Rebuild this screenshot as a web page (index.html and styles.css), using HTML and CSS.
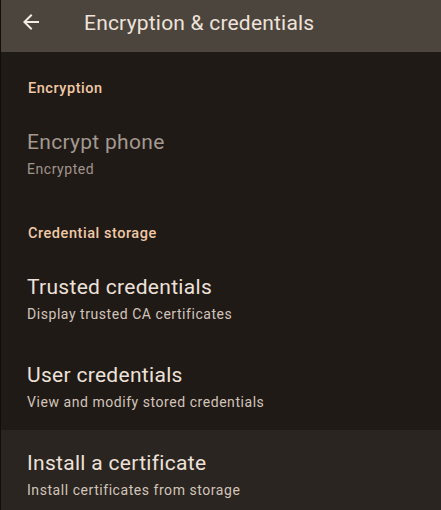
FILE: index.html
```html
<!DOCTYPE html>
<html lang="en">
<head>
<meta charset="utf-8">
<title>Encryption &amp; credentials</title>
<link rel="stylesheet" href="styles.css">
</head>
<body>
<div class="screen">
  <header class="appbar">
    <button class="back" aria-label="Back">
      <svg width="24" height="24" viewBox="0 0 24 24"><path d="M20 11H7.83l5.59-5.59L12 4l-8 8 8 8 1.41-1.41L7.83 13H20v-2z" fill="currentColor"/></svg>
    </button>
    <h1 class="title">Encryption &amp; credentials</h1>
  </header>
  <main class="list">
    <div class="category">Encryption</div>
    <div class="pref disabled">
      <div class="pref-title">Encrypt phone</div>
      <div class="pref-summary">Encrypted</div>
    </div>
    <div class="category">Credential storage</div>
    <div class="pref">
      <div class="pref-title">Trusted credentials</div>
      <div class="pref-summary">Display trusted CA certificates</div>
    </div>
    <div class="pref">
      <div class="pref-title">User credentials</div>
      <div class="pref-summary">View and modify stored credentials</div>
    </div>
    <div class="pref focused">
      <div class="pref-title">Install a certificate</div>
      <div class="pref-summary">Install certificates from storage</div>
    </div>
  </main>
</div>
</body>
</html>
```
FILE: styles.css
```css
html, body {
  margin: 0;
  padding: 0;
  background: #201a17;
}
body {
  font-family: Roboto, "Noto Sans", "Liberation Sans", sans-serif;
  overflow: hidden;
}
.screen {
  width: 441px;
  height: 510px;
  box-sizing: border-box;
  border-left: 1px solid #100d0c;
  background: #201a17;
  overflow: hidden;
}
.appbar {
  height: 52px;
  box-sizing: border-box;
  padding-top: 9px;
  background: #4b453e;
  display: flex;
  align-items: flex-start;
}
.back {
  width: 24px;
  height: 24px;
  margin: 1px 0 0 18px;
  padding: 0;
  border: 0;
  background: none;
  color: #f3ebe4;
  display: flex;
}
.title {
  margin: 0 0 0 41px;
  font-size: 21px;
  font-weight: 400;
  letter-spacing: 0.2px;
  color: #efe3da;
  line-height: 28px;
}
.list {
  display: flex;
  flex-direction: column;
}
.category {
  height: 57px;
  box-sizing: border-box;
  padding: 27px 0 0 27px;
  font-size: 14.5px;
  font-weight: 500;
  letter-spacing: 0.55px;
  color: #f0c8a6;
  line-height: 20px;
}
.pref {
  height: 88px;
  box-sizing: border-box;
  padding: 19px 0 0 26px;
  display: flex;
  flex-direction: column;
}
.pref-title {
  font-size: 21px;
  line-height: 28px;
  letter-spacing: 0.3px;
  color: #ede1d9;
}
.pref-summary {
  margin-top: 3px;
  font-size: 14px;
  line-height: 20px;
  letter-spacing: 0.55px;
  color: #d2c4ba;
}
.pref.disabled .pref-title {
  color: #a39990;
}
.pref.disabled .pref-summary {
  color: #a0958c;
}
.pref.focused {
  background: #2a2520;
}
```
